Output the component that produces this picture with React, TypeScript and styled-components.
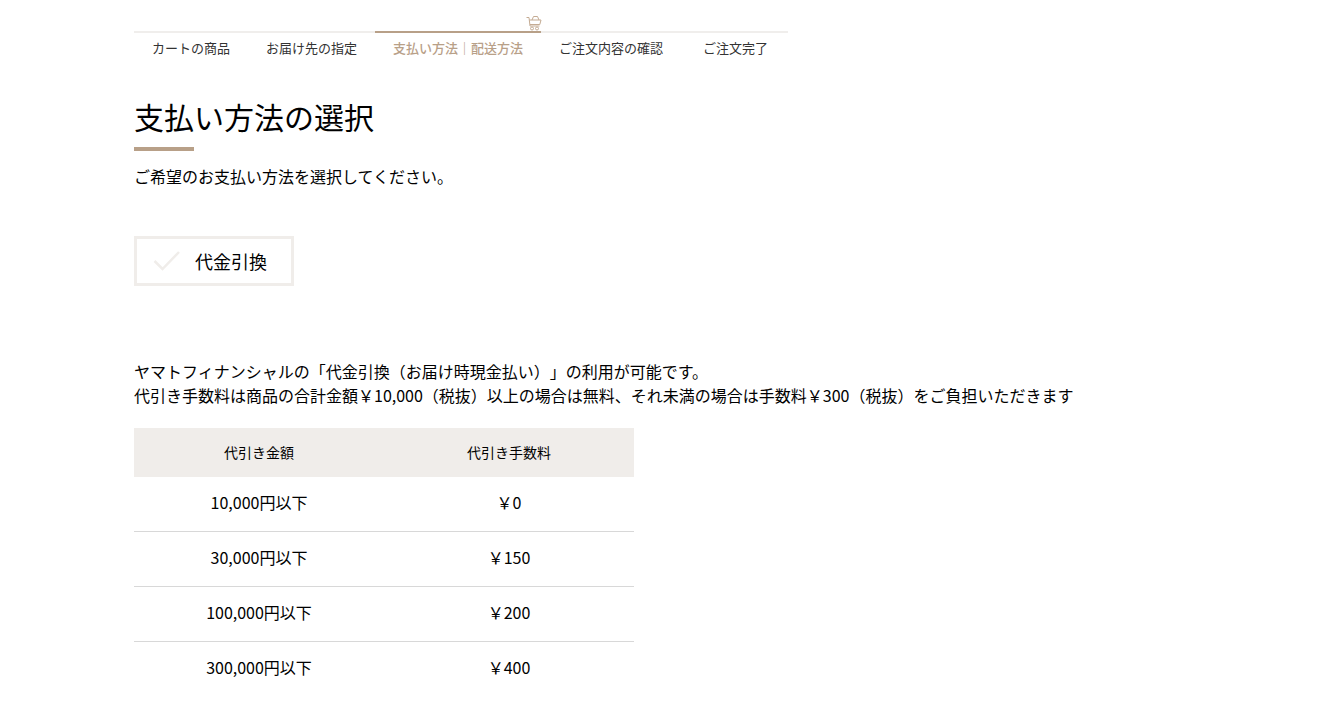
import React from "react";
import styled, { createGlobalStyle } from "styled-components";

const Global = createGlobalStyle`
  html, body { margin: 0; padding: 0; background: #fff; height: 720px; overflow: hidden; }
  body { font-family: "Noto Sans CJK JP", "Liberation Sans", sans-serif; color: #000; text-spacing-trim: space-all; }
`;
const Page = styled.main`
  width: 1320px;
  height: 720px;
  overflow: hidden;
  padding: 0 0 0 134px;
  box-sizing: border-box;
`;
const Stepper = styled.ol`
  display: flex;
  width: 654px;
  margin: 0;
  padding: 31px 0 0;
  list-style: none;
`;
const Step = styled.li<{ $active?: boolean; $grow?: boolean }>`
  position: relative;
  flex: ${(p) => (p.$grow ? "1 1 auto" : "0 0 auto")};
  height: 36px;
  padding: 0 18px;
  border-top: 2px solid ${(p) => (p.$active ? "#b8a088" : "#f0eeec")};
  font-size: 13px;
  line-height: 30px;
  white-space: nowrap;
  color: ${(p) => (p.$active ? "#b8a088" : "#333")};
  font-weight: ${(p) => (p.$active ? 500 : 400)};
  text-align: ${(p) => (p.$grow ? "right" : "left")};
  ${(p) => (p.$grow ? "padding-right: 20px;" : "")}
`;
const CartMark = styled.svg`
  position: absolute;
  right: -1px;
  top: -18px;
  width: 16px;
  height: 16px;
`;
const Title = styled.h1`
  margin: 25px 0 0;
  font-size: 30px;
  line-height: 44px;
  font-weight: 400;
`;
const Rule = styled.div`
  width: 60px;
  height: 4px;
  margin-top: 9px;
  background: #b8a088;
`;
const Lead = styled.p`
  margin: 13px 0 0;
  font-size: 16px;
  line-height: 24px;
`;
const MethodBox = styled.div`
  display: flex;
  align-items: center;
  width: 160px;
  height: 50px;
  margin-top: 48px;
  box-sizing: border-box;
  border: 3px solid #f0edea;
`;
const Check = styled.svg`
  width: 28px;
  height: 22px;
  margin-left: 16px;
  flex: none;
`;
const MethodLabel = styled.span`
  margin-left: 14px;
  font-size: 18px;
  line-height: 26px;
`;
const Notice = styled.p`
  margin: 73px 0 0;
  font-size: 16px;
  line-height: 24px;
  white-space: nowrap;
`;
const FeeTable = styled.table`
  width: 500px;
  margin-top: 21px;
  border-collapse: separate;
  border-spacing: 0;
  table-layout: fixed;
`;
const Head = styled.th`
  height: 49px;
  padding: 0 0 2px;
  box-sizing: border-box;
  background: #f0edea;
  font-size: 14px;
  font-weight: 400;
  text-align: center;
`;
const Cell = styled.td`
  height: 55px;
  padding: 0 0 4px;
  box-sizing: border-box;
  font-size: 16px;
  text-align: center;
  border-bottom: 1px solid #d8d8d8;
  tr:last-child & { border-bottom-color: transparent; }
`;

const rows = [
  ["10,000円以下", "￥0"],
  ["30,000円以下", "￥150"],
  ["100,000円以下", "￥200"],
  ["300,000円以下", "￥400"],
];

export default function App() {
  return (
    <>
      <Global />
      <Page>
        <Stepper>
          <Step>カートの商品</Step>
          <Step>お届け先の指定</Step>
          <Step $active>
            支払い方法｜配送方法
            <CartMark viewBox="0 0 16 16" fill="none" stroke="#c4ab93" strokeWidth="1">
              <path d="M0.500 2.500H3l1 8.500h9.500" />
              <path d="M3.300 5H15l-1.200 4.500H4" />
              <path d="M6 5l1.500-3.500h4L13 5" />
              <circle cx="6" cy="13.500" r="1.500" />
              <circle cx="11" cy="13.500" r="1.500" />
            </CartMark>
          </Step>
          <Step>ご注文内容の確認</Step>
          <Step $grow>ご注文完了</Step>
        </Stepper>
        <Title>支払い方法の選択</Title>
        <Rule />
        <Lead>ご希望のお支払い方法を選択してください。</Lead>
        <MethodBox>
          <Check viewBox="0 0 28 22" fill="none" stroke="#f0edea" strokeWidth="2.500">
            <path d="M1.500 11l8 8L26 2" />
          </Check>
          <MethodLabel>代金引換</MethodLabel>
        </MethodBox>
        <Notice>
          ヤマトフィナンシャルの「代金引換（お届け時現金払い）」の利用が可能です。
          <br />
          代引き手数料は商品の合計金額￥10,000（税抜）以上の場合は無料、それ未満の場合は手数料￥300（税抜）をご負担いただきます
        </Notice>
        <FeeTable>
          <thead>
            <tr>
              <Head>代引き金額</Head>
              <Head>代引き手数料</Head>
            </tr>
          </thead>
          <tbody>
            {rows.map(([a, b]) => (
              <tr key={a}>
                <Cell>{a}</Cell>
                <Cell>{b}</Cell>
              </tr>
            ))}
          </tbody>
        </FeeTable>
      </Page>
    </>
  );
}
